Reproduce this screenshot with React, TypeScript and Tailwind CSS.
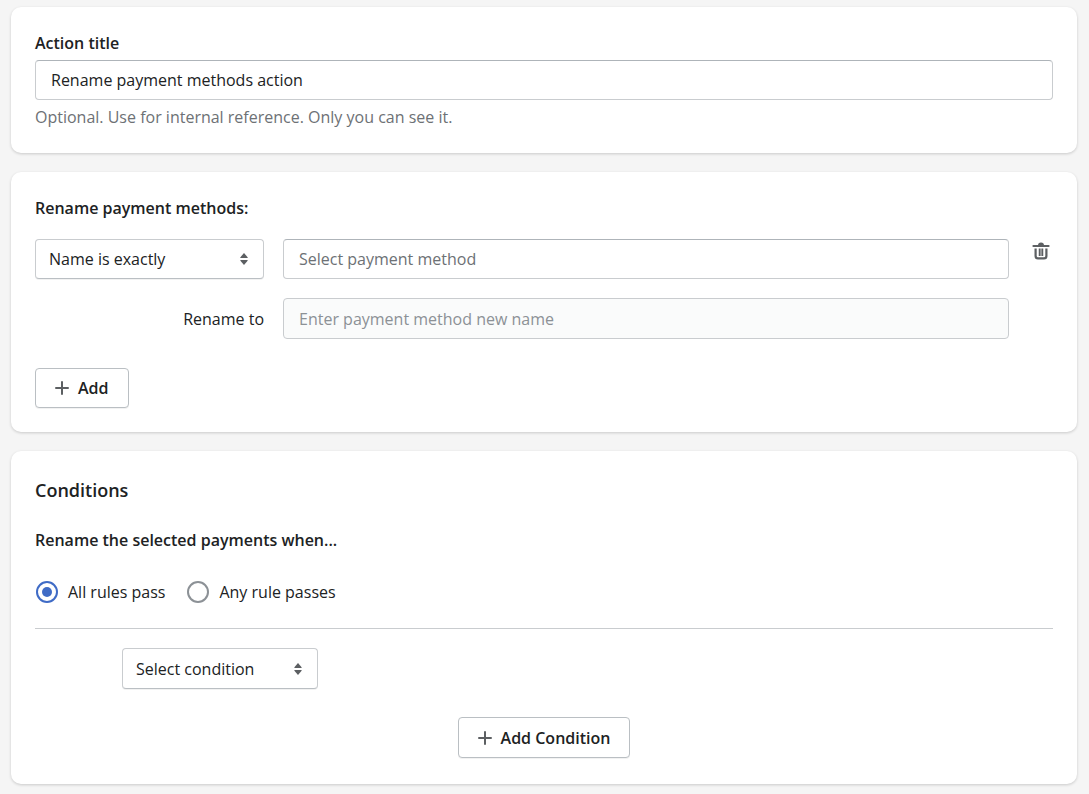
import React, { useState } from "react";

interface CardProps {
  className?: string;
  children: React.ReactNode;
}

const Card = ({ className = "", children }: CardProps) => (
  <section
    className={`rounded-[10px] bg-white px-6 pt-6 shadow-[0_1px_3px_rgba(0,0,0,0.18)] ${className}`}
  >
    {children}
  </section>
);

const SelectIcon = () => (
  <svg
    viewBox="0 0 8 12"
    className="pointer-events-none absolute top-1/2 right-4 h-3 w-2 -translate-y-1/2 fill-[#5c5f62]"
    aria-hidden="true"
  >
    <path d="M4 0 L7.6 4.2 Q8 5 7.2 5 H0.8 Q0 5 0.4 4.2 Z" />
    <path d="M4 12 L7.6 7.8 Q8 7 7.2 7 H0.8 Q0 7 0.4 7.8 Z" />
  </svg>
);

const PlusIcon = () => (
  <svg
    viewBox="0 0 14 14"
    className="h-3.5 w-3.5 stroke-[#5c5f62]"
    strokeWidth="2"
    strokeLinecap="round"
    aria-hidden="true"
  >
    <path d="M7 1v12M1 7h12" />
  </svg>
);

const TrashIcon = () => (
  <svg
    viewBox="0 0 18 18"
    className="h-[18px] w-[18px] fill-none stroke-[#5c5f62]"
    strokeWidth="2"
    aria-hidden="true"
  >
    <path d="M1.4 4h15.2" strokeLinecap="round" />
    <path d="M6 3.5q0-3 3-3t3 3z" fill="#5c5f62" stroke="none" />
    <path d="M3.6 6.6V14q0 2.4 2.4 2.4h6q2.4 0 2.4-2.4V6.6" strokeWidth="2.2" />
    <path d="M7.7 6.6V14M10.3 6.6V14" strokeWidth="1.9" />
  </svg>
);

interface SelectProps {
  label: string;
  options: string[];
  className: string;
}

const Select = ({ label, options, className }: SelectProps) => (
  <div className={`relative ${className}`}>
    <select
      aria-label={label}
      className="h-full w-full appearance-none rounded border border-[#c9cccf] border-b-[#babfc3] bg-white pr-8 pl-[13px] shadow-[0_1px_0_rgba(0,0,0,0.05)]"
    >
      {options.map((option) => (
        <option key={option}>{option}</option>
      ))}
    </select>
    <SelectIcon />
  </div>
);

interface AddButtonProps {
  className: string;
  children: React.ReactNode;
}

const AddButton = ({ className, children }: AddButtonProps) => (
  <button
    type="button"
    className={`flex items-center gap-[9px] rounded border border-[#babfc3] bg-white px-[19px] font-semibold shadow-[0_1px_0_rgba(0,0,0,0.05)] hover:bg-gray-50 ${className}`}
  >
    <PlusIcon />
    {children}
  </button>
);

const matchModes = [
  { value: "all", label: "All rules pass" },
  { value: "any", label: "Any rule passes" },
];

const App = () => {
  const [title, setTitle] = useState("Rename payment methods action");
  const [matchMode, setMatchMode] = useState("all");

  return (
    <main className="flex min-h-screen flex-col gap-[19px] bg-[#f5f5f5] pt-[7px] pr-3 pb-2.5 pl-[11px] font-['Open_Sans','Noto_Sans',sans-serif] text-base leading-6 text-[#202223]">
      <Card className="flex flex-col gap-[5px] pb-6">
        <label htmlFor="title" className="font-semibold">
          Action title
        </label>
        <input
          id="title"
          value={title}
          onChange={(e) => setTitle(e.target.value)}
          className="h-10 w-full rounded border border-[#c9cccf] border-t-[#aeb4b9] px-[15px]"
        />
        <p className="text-[#6d7175]">
          Optional. Use for internal reference. Only you can see it.
        </p>
      </Card>

      <Card className="pb-6">
        <h2 className="font-semibold">Rename payment methods:</h2>
        <div className="mt-[19px] grid grid-cols-[229px_1fr_25px] gap-[19px]">
          <Select
            label="Match type"
            options={["Name is exactly", "Name contains"]}
            className="h-10"
          />
          <input
            aria-label="Payment method"
            placeholder="Select payment method"
            className="h-10 w-full rounded border border-[#c9cccf] border-t-[#aeb4b9] px-[15px] placeholder:text-[#6d7175]"
          />
          <button
            type="button"
            aria-label="Delete"
            className="flex h-6 items-center justify-center"
          >
            <TrashIcon />
          </button>
          <label htmlFor="new-name" className="self-center text-right">
            Rename to
          </label>
          <input
            id="new-name"
            disabled
            placeholder="Enter payment method new name"
            className="h-[41px] w-full rounded border border-[#c9cccf] bg-[#fafbfb] px-[15px] placeholder:text-[#8c9196]"
          />
        </div>
        <AddButton className="mt-[29px] h-10">Add</AddButton>
      </Card>

      <Card className="pb-[26px]">
        <h2 className="text-lg leading-[30px] font-semibold">Conditions</h2>
        <fieldset className="mt-[23px]">
          <legend className="font-semibold">
            Rename the selected payments when...
          </legend>
          <div className="mt-7 flex gap-[22px] pl-px">
            {matchModes.map(({ value, label }) => (
              <label key={value} className="flex items-center gap-2.5">
                <input
                  type="radio"
                  name="match-mode"
                  value={value}
                  checked={matchMode === value}
                  onChange={() => setMatchMode(value)}
                  className="h-[22px] w-[22px] appearance-none rounded-full border-2 border-[#8c9196] bg-white bg-clip-content p-1 checked:border-[#3f6bc6] checked:bg-[#3f6bc6]"
                />
                {label}
              </label>
            ))}
          </div>
        </fieldset>
        <hr className="mt-6 border-[#c9cccf]" />
        <Select
          label="Condition"
          options={["Select condition", "Cart total", "Country"]}
          className="mt-[19px] ml-[87px] h-[41px] w-[196px]"
        />
        <AddButton className="mx-auto mt-7 h-[41px]">Add Condition</AddButton>
      </Card>
    </main>
  );
};

export default App;
